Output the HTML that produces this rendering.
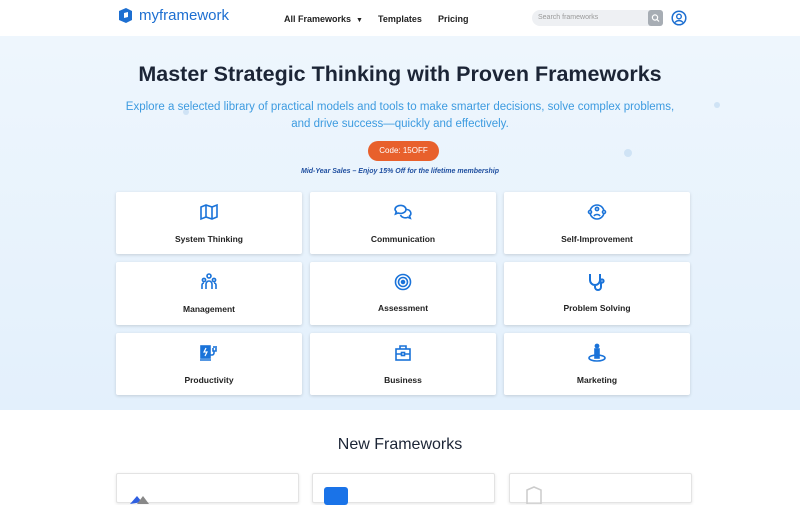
<!DOCTYPE html>
<html><head><style>
*{margin:0;padding:0;box-sizing:border-box}
body{width:800px;height:496px;overflow:hidden;font-family:"Liberation Sans",sans-serif;background:#fff;position:relative}
.hdr{height:36px;position:relative;background:#fff}
.logo{position:absolute;left:117px;top:7px;display:flex;align-items:center;gap:5px;color:#1d6fd1;font-size:15px}
.nav{position:absolute;top:14px;font-size:9px;font-weight:bold;color:#222}
.search{position:absolute;left:532px;top:10px;width:131px;height:16px;background:#eef0f3;border-radius:8px 3px 3px 8px;font-size:7px;color:#999;padding:4px 6px}
.sbtn{position:absolute;right:0;top:0;width:15px;height:16px;background:#a7adb4;border-radius:3px}
.hero{position:absolute;top:36px;left:0;width:800px;height:374px;background:linear-gradient(180deg,#eef6fd 0%,#e3f0fc 100%)}
h1{position:absolute;top:62px;width:800px;text-align:center;font-size:21.5px;color:#1c2536;font-weight:bold}
.sub{position:absolute;top:99px;width:800px;text-align:center;font-size:11.5px;color:#3d9be0;line-height:16.5px}
.btn{position:absolute;left:368px;top:141px;width:71px;height:20px;border-radius:10px;background:#e8602c;color:#fff;font-size:8px;text-align:center;line-height:20px}
.note{position:absolute;top:168px;width:800px;text-align:center;font-size:7px;font-style:italic;font-weight:bold;color:#1f4fa0}
.card{position:absolute;width:186px;background:#fff;border-radius:2px;box-shadow:0 1px 3px rgba(0,0,0,.15);text-align:center}
.card svg{position:absolute;left:83px;top:10px}
.card span{position:absolute;left:0;width:100%;font-size:8.5px;font-weight:bold;color:#222}
.nf{position:absolute;top:436px;width:800px;text-align:center;font-size:16px;color:#1c2536}
.bc{position:absolute;top:473px;width:183px;height:30px;background:#fff;border:1px solid #e3e3e3;border-radius:2px;box-shadow:0 1px 3px rgba(0,0,0,.1)}
.dot{position:absolute;width:8px;height:8px;border-radius:50%;background:#cfe3f5}
</style></head><body>
<div class="hdr">
<div class="logo"><svg width="17" height="17" viewBox="0 0 17 17"><path d="M2 4 L9 1 L15 4 L15 13 L9 16 L2 13Z" fill="#1d6fd1"/><path d="M7 6 L11 5 L11 10 L7 11Z" fill="#fff"/></svg>myframework</div>
<div class="nav" style="left:284px">All Frameworks &nbsp;<span style="font-size:7px">▼</span></div>
<div class="nav" style="left:378px">Templates</div>
<div class="nav" style="left:438px">Pricing</div>
<div class="search">Search frameworks<div class="sbtn"><svg width="15" height="16"><circle cx="7" cy="7.5" r="2.6" fill="none" stroke="#fff" stroke-width="1.2"/><path d="M9 9.5l2 2" stroke="#fff" stroke-width="1.2"/></svg></div></div>
<svg style="position:absolute;left:671px;top:10px" width="16" height="16"><circle cx="8" cy="8" r="6.8" fill="none" stroke="#1d6fd1" stroke-width="1.5"/><circle cx="8" cy="6.5" r="2.3" fill="none" stroke="#1d6fd1" stroke-width="1.4"/><path d="M4 12.5c2-2.5 6-2.5 8 0" fill="none" stroke="#1d6fd1" stroke-width="1.4"/></svg>
</div>
<div class="hero">
<div class="dot" style="left:624px;top:113px"></div><div class="dot" style="left:714px;top:66px;width:6px;height:6px"></div><div class="dot" style="left:183px;top:73px;width:6px;height:6px"></div>
</div>
<h1>Master Strategic Thinking with Proven Frameworks</h1>
<div class="sub">Explore a selected library of practical models and tools to make smarter decisions, solve complex problems,<br>and drive success—quickly and effectively.</div>
<div class="btn">Code: 15OFF</div>
<div class="note">Mid-Year Sales – Enjoy 15% Off for the lifetime membership</div>

<div class="card" style="left:116px;top:192px;height:62px"><svg width="20" height="20" viewBox="0 0 20 20" fill="none" stroke="#1a73d9" stroke-width="1.6"><path d="M2 5l5-2 6 2 5-2v12l-5 2-6-2-5 2z M7 3v12 M13 5v12"/></svg><span style="top:42px">System Thinking</span></div>
<div class="card" style="left:310px;top:192px;height:62px"><svg width="20" height="20" viewBox="0 0 20 20" fill="none" stroke="#1a73d9" stroke-width="1.6"><path d="M2 7.5a5.5 4 0 1 1 3 3.5l-2.5 1 .8-2.4A4 4 0 0 1 2 7.5z"/><path d="M13.5 7.5a4.5 3.8 0 0 1 3 6.5l.8 2.3-2.6-1A5 4 0 0 1 7.5 13"/></svg><span style="top:42px">Communication</span></div>
<div class="card" style="left:504px;top:192px;height:62px"><svg width="20" height="20" viewBox="0 0 20 20" fill="none" stroke="#1a73d9" stroke-width="1.6"><circle cx="10" cy="10" r="7"/><circle cx="10" cy="7" r="1.6"/><path d="M7 14c1-2 5-2 6 0"/><circle cx="3" cy="10" r="1.5" fill="#fff"/><circle cx="17" cy="10" r="1.5" fill="#fff"/></svg><span style="top:42px">Self-Improvement</span></div>

<div class="card" style="left:116px;top:262px;height:63px"><svg width="20" height="20" viewBox="0 0 20 20" fill="none" stroke="#1a73d9" stroke-width="1.6"><circle cx="10" cy="4" r="2"/><circle cx="5" cy="8" r="1.6"/><circle cx="15" cy="8" r="1.6"/><path d="M7 17v-5a3 3 0 0 1 6 0v5 M3 17v-4a2 2 0 0 1 2-2 M17 17v-4a2 2 0 0 0-2-2"/></svg><span style="top:42px">Management</span></div>
<div class="card" style="left:310px;top:262px;height:63px"><svg width="20" height="20" viewBox="0 0 20 20" fill="none" stroke="#1a73d9" stroke-width="1.6"><circle cx="10" cy="10" r="7.5"/><circle cx="10" cy="10" r="4.5"/><circle cx="10" cy="10" r="1.5" fill="#1a73d9"/></svg><span style="top:41px">Assessment</span></div>
<div class="card" style="left:504px;top:262px;height:63px"><svg width="20" height="20" viewBox="0 0 20 20" fill="none" stroke="#1a73d9" stroke-width="2"><path d="M3 2v6a5 5 0 0 0 10 0V2 M8 13v2a3 3 0 0 0 6 0v-4"/><circle cx="15" cy="9" r="1.6"/></svg><span style="top:41px">Problem Solving</span></div>

<div class="card" style="left:116px;top:333px;height:62px"><svg width="20" height="20" viewBox="0 0 20 20" fill="none" stroke="#1a73d9" stroke-width="1.6"><rect x="2" y="3" width="9" height="12" fill="#1a73d9"/><path d="M7 5l-2 4h3l-2 4" stroke="#fff" stroke-width="1.2"/><path d="M1 17h11 M11 12h2a2 2 0 0 0 2-2V8 M14 5v3h3V5 M15 5V3 M17 5V3"/></svg><span style="top:42px">Productivity</span></div>
<div class="card" style="left:310px;top:333px;height:62px"><svg width="20" height="20" viewBox="0 0 20 20" fill="none" stroke="#1a73d9" stroke-width="1.6"><rect x="3" y="6" width="14" height="11"/><path d="M7 6V3h6v3 M3 11h14"/><rect x="8.5" y="9.5" width="3" height="3" fill="#fff"/></svg><span style="top:42px">Business</span></div>
<div class="card" style="left:504px;top:333px;height:62px"><svg width="20" height="20" viewBox="0 0 20 20" fill="none" stroke="#1a73d9" stroke-width="1.6"><circle cx="10" cy="3" r="1.6" fill="#1a73d9"/><rect x="8" y="6" width="4" height="9" fill="#1a73d9"/><ellipse cx="10" cy="15" rx="8" ry="3"/></svg><span style="top:42px">Marketing</span></div>

<div class="nf">New Frameworks</div>
<div class="bc" style="left:116px"><svg width="30" height="20" style="position:absolute;left:10px;top:10px"><path d="M3 20l7-8 5 6" fill="#2f5fe0"/><path d="M10 20l6-8 6 8z" fill="#888"/></svg></div>
<div class="bc" style="left:312px"><div style="position:absolute;left:11px;top:13px;width:24px;height:18px;background:#1a73e8;border-radius:3px"></div></div>
<div class="bc" style="left:509px"><svg width="20" height="20" style="position:absolute;left:14px;top:10px"><path d="M3 6l7-3 7 3v14H3z" fill="none" stroke="#ccc" stroke-width="1.5"/></svg></div>
</body></html>
